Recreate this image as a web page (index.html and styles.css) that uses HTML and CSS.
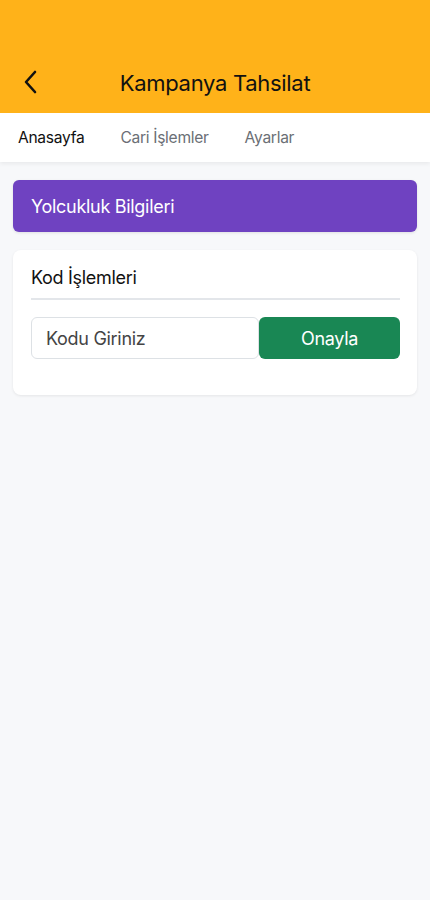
FILE: index.html
```html
<!DOCTYPE html>
<html lang="tr">
<head>
<meta charset="utf-8">
<title>Kampanya Tahsilat</title>
<link rel="stylesheet" href="styles.css">
</head>
<body>
<header class="topbar">
  <button class="back" aria-label="Geri">
    <svg width="16" height="24" viewBox="0 0 16 24"><path d="M12 2 L3 12 L12 22" fill="none" stroke="#111" stroke-width="2.6" stroke-linecap="round" stroke-linejoin="round"/></svg>
  </button>
  <h1 class="title">Kampanya Tahsilat</h1>
</header>
<nav class="tabs">
  <a class="tab active">Anasayfa</a>
  <a class="tab">Cari İşlemler</a>
  <a class="tab">Ayarlar</a>
</nav>
<main class="content">
  <div class="banner">Yolcukluk Bilgileri</div>
  <section class="card">
    <h2 class="card-title">Kod İşlemleri</h2>
    <div class="code-row">
      <input class="code-input" type="text" placeholder="Kodu Giriniz">
      <button class="confirm">Onayla</button>
    </div>
  </section>
</main>
</body>
</html>
```
FILE: styles.css
```css
* { box-sizing: border-box; }
html, body { margin: 0; padding: 0; }
body {
  width: 430px;
  min-height: 900px;
  background: #f7f8fa;
  font-family: Inter, "Noto Sans", sans-serif;
  letter-spacing: -0.3px;
  color: #111;
}
.topbar {
  height: 113px;
  background: #ffb219;
  position: relative;
  display: flex;
  align-items: flex-end;
  justify-content: center;
  padding-bottom: 16px;
}
.back {
  position: absolute;
  left: 19px;
  bottom: 19px;
  background: none;
  border: 0;
  padding: 0;
  width: 24px;
  height: 24px;
  display: flex;
  align-items: center;
  justify-content: center;
}
.title {
  margin: 0;
  font-size: 22px;
  font-weight: 400;
  line-height: 28px;
  color: #111;
}
.tabs {
  height: 49px;
  background: #fff;
  display: flex;
  align-items: center;
  gap: 36px;
  padding-left: 18px;
  box-shadow: 0 2px 4px rgba(0,0,0,0.06);
}
.tab {
  font-size: 15.6px;
  color: #6b6f76;
}
.tab.active { color: #111; }
.content {
  padding: 18px 13px;
  display: flex;
  flex-direction: column;
  gap: 18px;
}
.banner {
  height: 52px;
  background: #6f42c1;
  border-radius: 6px;
  color: #fff;
  font-size: 18px;
  display: flex;
  align-items: center;
  padding-left: 18px;
  box-shadow: 0 1px 3px rgba(0,0,0,0.1);
}
.card {
  background: #fff;
  border-radius: 8px;
  box-shadow: 0 1px 3px rgba(0,0,0,0.08);
  padding: 16px 17px 36px 18px;
}
.card-title {
  margin: 0;
  font-size: 18px;
  font-weight: 400;
  line-height: 24px;
  padding-bottom: 8px;
  border-bottom: 2px solid #e3e6ea;
}
.code-row {
  display: grid;
  grid-template-columns: 228px 1fr;
  margin-top: 17px;
}
.code-input {
  width: 100%;
  min-width: 0;
  height: 42px;
  border: 1px solid #dde1e5;
  border-radius: 6px;
  padding: 0 14px;
  font-family: inherit;
  letter-spacing: inherit;
  font-size: 18px;
  color: #333;
  background: #fff;
}
.code-input::placeholder { color: #444; }
.confirm {
  height: 42px;
  border: 0;
  border-radius: 6px;
  background: #198754;
  color: #fff;
  font-family: inherit;
  letter-spacing: inherit;
  font-size: 18px;
}
```
